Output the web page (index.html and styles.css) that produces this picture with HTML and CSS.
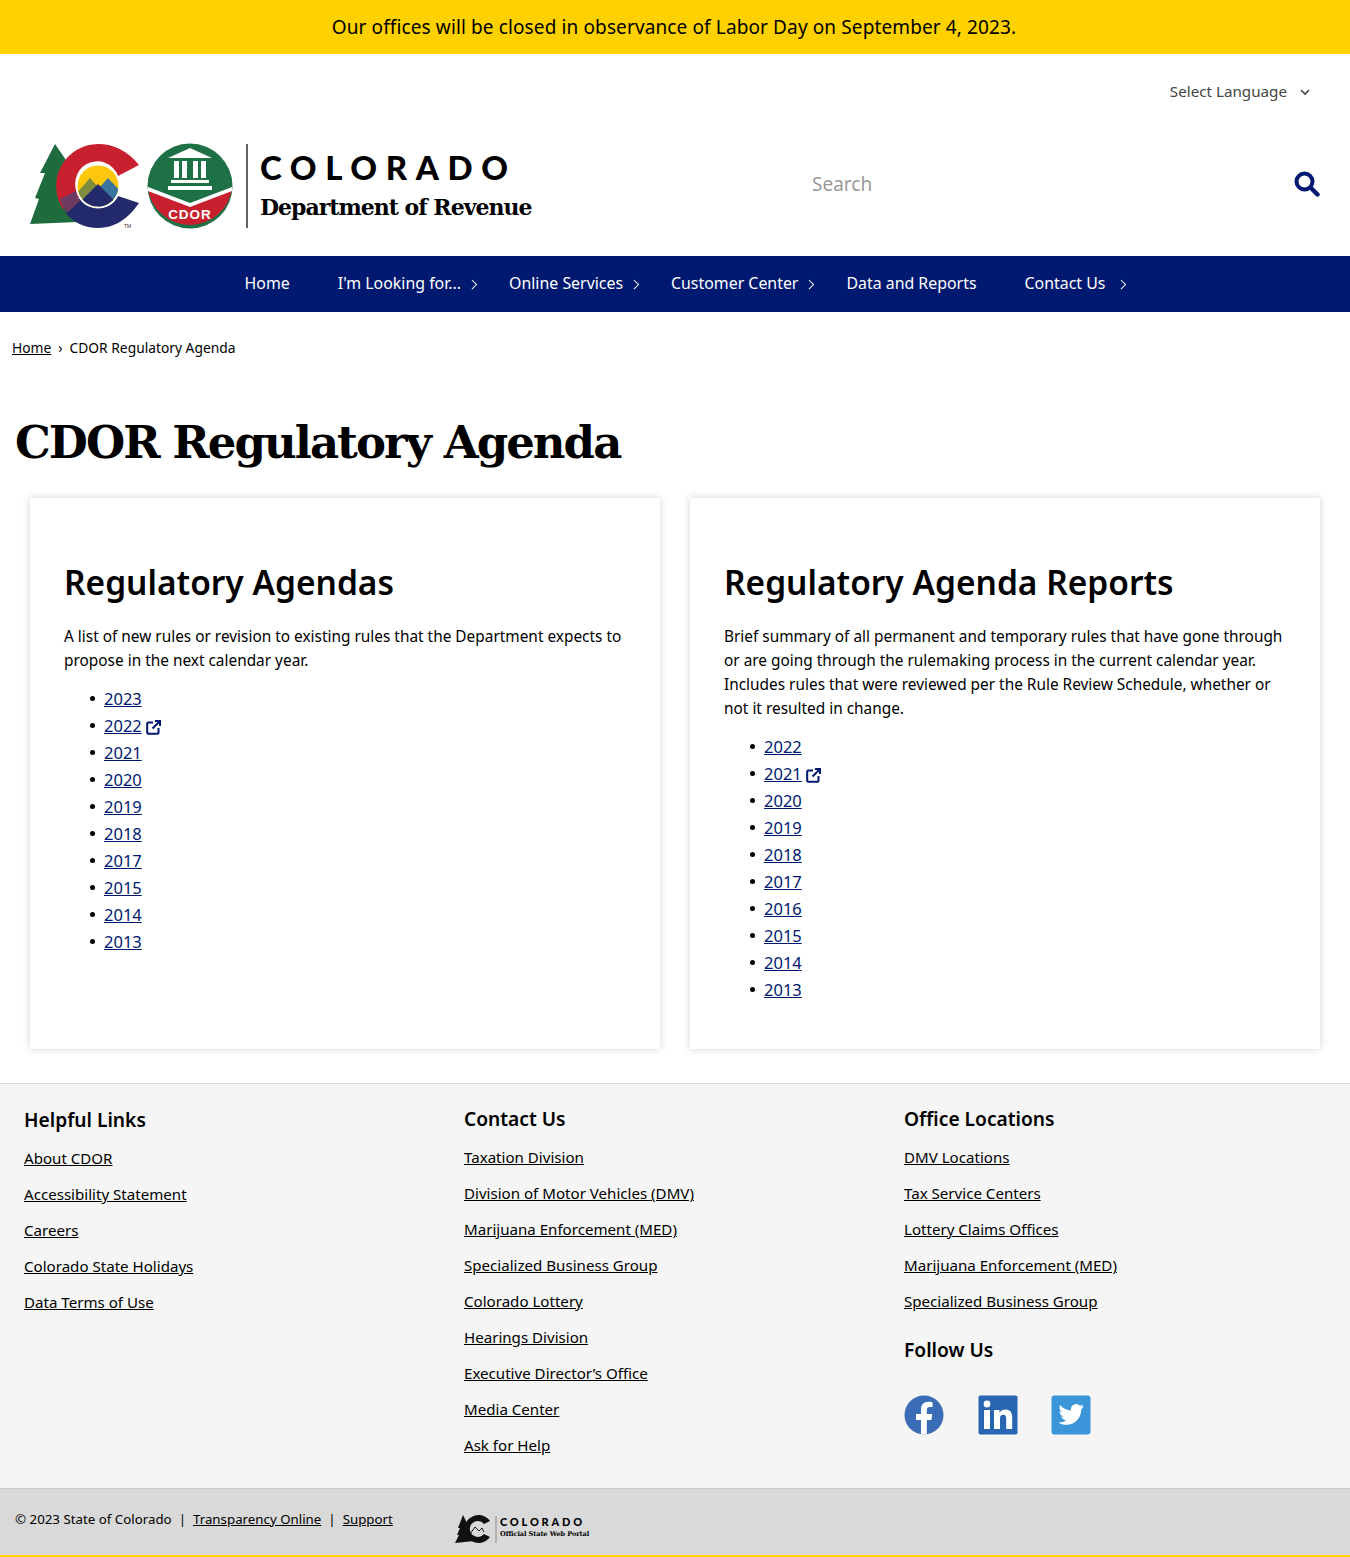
FILE: index.html
```html
<!DOCTYPE html>
<html lang="en">
<head>
<meta charset="utf-8">
<title>CDOR Regulatory Agenda</title>
<link rel="stylesheet" href="styles.css">
</head>
<body>
<div class="alert">Our offices will be closed in observance of Labor Day on September 4, 2023.</div>
<div class="lang"><span>Select Language</span>
<svg class="lang-chev" width="10" height="7" viewBox="0 0 10 7"><path d="M1 1l4 4 4-4" fill="none" stroke="#444" stroke-width="1.6"/></svg></div>
<header class="head">
  <a class="brand" href="#">
    <svg class="marks" width="218" height="86" viewBox="30 142 218 86">
      <defs><clipPath id="sun"><circle cx="98" cy="185" r="20.500"/></clipPath></defs>
      <path d="M55 143L68 162 76 200 78 221 30 223 39 198 35 197 45 172 40 172z" fill="#1e6b3e"/>
      <path d="M139 164Q122 143 98 143A42 42 0 0 0 63 208L80 196A22 22 0 1 1 118 175z" fill="#c8202f"/>
      <path d="M139 202Q122 227 98 227A42 42 0 0 1 65 211L80 197A22 22 0 0 0 118 195z" fill="#232a6c"/>
      <path d="M60 198A42 42 0 0 0 67 212L80 200A22 22 0 0 1 76 190z" fill="#6d3b62"/>
      <circle cx="98" cy="185" r="22.500" fill="#fff"/>
      <g clip-path="url(#sun)">
        <rect x="76" y="163" width="44" height="44" fill="#fdc70c"/>
        <path d="M76 193L90 177 106 195 90 210H76z" fill="#7f8b3f"/>
        <path d="M92 195L108 177 122 192V207H100z" fill="#3b749f"/>
        <path d="M80 201L98 183 116 201 98 210z" fill="#232a6c"/>
      </g>
      <text x="124" y="227" class="tm">TM</text>
      <circle cx="190" cy="185" r="42.500" fill="#1e7145"/>
      <path d="M148 188L190 204 232 188A42.500 42.500 0 0 1 148 188z" fill="#c8202f"/>
      <path d="M148 186L190 202 232 186V190L190 206 148 190z" fill="#fff"/>
      <path d="M168 157L190 147 212 157z" fill="#fff"/>
      <path d="M174 160h5v17h-5zM182 160h5v17h-5zM193 160h5v17h-5zM201 160h5v17h-5z" fill="#fff"/>
      <path d="M171 179h38v3h-38zM168 185h44v4h-44z" fill="#fff"/>
      <text x="190" y="218" class="cdor" text-anchor="middle">CDOR</text>
      <path d="M247 143v84" stroke="#222" stroke-width="1.400"/>
    </svg>
    <span class="brand-text">
      <span class="brand-state">COLORADO</span>
      <span class="brand-dept">Department of Revenue</span>
    </span>
  </a>
  <div class="search">
    <input class="search-input" type="text" placeholder="Search" aria-label="Search">
    <svg width="26" height="26" viewBox="0 0 26 26"><circle cx="10.500" cy="10.500" r="8" fill="none" stroke="#001970" stroke-width="4"/><path d="M16.500 16.500l7 7" stroke="#001970" stroke-width="4.400" stroke-linecap="round"/></svg>
  </div>
</header>
<nav class="nav">
  <a class="nav-item" href="#">Home</a>
  <a class="nav-item has-sub" href="#">I'm Looking for...</a>
  <a class="nav-item has-sub" href="#">Online Services</a>
  <a class="nav-item has-sub" href="#">Customer Center</a>
  <a class="nav-item" href="#">Data and Reports</a>
  <a class="nav-item has-sub nav-item-last" href="#">Contact Us</a>
</nav>
<div class="crumbs"><a href="#">Home</a><span class="crumb-sep">›</span><span>CDOR Regulatory Agenda</span></div>
<h1 class="title">CDOR Regulatory Agenda</h1>
<main class="cards">
  <section class="card">
    <h2>Regulatory Agendas</h2>
    <p>A list of new rules or revision to existing rules that the Department expects to propose in the next calendar year.</p>
    <ul>
      <li><a href="#">2023</a></li>
      <li><a href="#">2022</a><svg class="ext" width="15" height="15" viewBox="0 0 15 15"><path d="M7 2.500H2.200a1 1 0 0 0-1 1v9.300a1 1 0 0 0 1 1h9.300a1 1 0 0 0 1-1V8M9 1h5v5M14 1L6.500 8.500" fill="none" stroke="#001970" stroke-width="2"/></svg></li>
      <li><a href="#">2021</a></li>
      <li><a href="#">2020</a></li>
      <li><a href="#">2019</a></li>
      <li><a href="#">2018</a></li>
      <li><a href="#">2017</a></li>
      <li><a href="#">2015</a></li>
      <li><a href="#">2014</a></li>
      <li><a href="#">2013</a></li>
    </ul>
  </section>
  <section class="card">
    <h2>Regulatory Agenda Reports</h2>
    <p>Brief summary of all permanent and temporary rules that have gone through or are going through the rulemaking process in the current calendar year. Includes rules that were reviewed per the Rule Review Schedule, whether or not it resulted in change.</p>
    <ul>
      <li><a href="#">2022</a></li>
      <li><a href="#">2021</a><svg class="ext" width="15" height="15" viewBox="0 0 15 15"><path d="M7 2.500H2.200a1 1 0 0 0-1 1v9.300a1 1 0 0 0 1 1h9.300a1 1 0 0 0 1-1V8M9 1h5v5M14 1L6.500 8.500" fill="none" stroke="#001970" stroke-width="2"/></svg></li>
      <li><a href="#">2020</a></li>
      <li><a href="#">2019</a></li>
      <li><a href="#">2018</a></li>
      <li><a href="#">2017</a></li>
      <li><a href="#">2016</a></li>
      <li><a href="#">2015</a></li>
      <li><a href="#">2014</a></li>
      <li><a href="#">2013</a></li>
    </ul>
  </section>
</main>
<footer class="foot">
  <div class="foot-col foot-col-first">
    <h3>Helpful Links</h3>
    <a href="#">About CDOR</a>
    <a href="#">Accessibility Statement</a>
    <a href="#">Careers</a>
    <a href="#">Colorado State Holidays</a>
    <a href="#">Data Terms of Use</a>
  </div>
  <div class="foot-col">
    <h3>Contact Us</h3>
    <a href="#">Taxation Division</a>
    <a href="#">Division of Motor Vehicles (DMV)</a>
    <a href="#">Marijuana Enforcement (MED)</a>
    <a href="#">Specialized Business Group</a>
    <a href="#">Colorado Lottery</a>
    <a href="#">Hearings Division</a>
    <a href="#">Executive Director’s Office</a>
    <a href="#">Media Center</a>
    <a href="#">Ask for Help</a>
  </div>
  <div class="foot-col">
    <h3>Office Locations</h3>
    <a href="#">DMV Locations</a>
    <a href="#">Tax Service Centers</a>
    <a href="#">Lottery Claims Offices</a>
    <a href="#">Marijuana Enforcement (MED)</a>
    <a href="#">Specialized Business Group</a>
    <h3 class="follow">Follow Us</h3>
    <div class="social">
      <svg width="40" height="40" viewBox="0 0 40 40"><circle cx="20" cy="20" r="19.500" fill="#3a6db5"/><path d="M17 39.500V25h-5v-6h5v-4.500c0-5 3-7.700 7.500-7.700 2.200 0 4 .3 4 .3v5h-2.500c-2.500 0-3.200 1.500-3.200 3.100V19h5.500l-.9 6h-4.600v14.500z" fill="#fff"/></svg>
      <svg width="40" height="40" viewBox="0 0 40 40"><rect x=".5" y=".5" width="39" height="39" rx="2" fill="#2866b1"/><circle cx="9" cy="9" r="3.400" fill="#fff"/><path d="M6 15h6v19H6zM16 15h5.500v2.800c1-1.800 3-3.300 6-3.300 5.500 0 6.700 3.600 6.700 8.400V34h-6V24c0-2.300-.4-4.300-3-4.300s-3.200 2-3.200 4.200V34h-6z" fill="#fff"/></svg>
      <svg width="40" height="40" viewBox="0 0 40 40"><rect x=".5" y=".5" width="39" height="39" rx="3" fill="#3a96d9"/><path d="M33 11.500c-1 .4-2 .7-3 .8 1.100-.7 1.900-1.700 2.300-2.900-1 .6-2.200 1-3.300 1.300a5.300 5.300 0 0 0-9 4.800C15.600 15.300 11.800 13.200 9.200 10c-1.400 2.400-.7 5.500 1.600 7-.9 0-1.700-.3-2.400-.7 0 2.500 1.800 4.700 4.200 5.200-.8.200-1.600.2-2.400.1.700 2.100 2.600 3.600 4.900 3.700-2.200 1.700-5 2.500-7.800 2.200 2.300 1.500 5.100 2.300 8 2.300 9.700 0 15.200-8.200 14.900-15.600 1-.8 1.900-1.700 2.800-2.700z" fill="#fff"/></svg>
    </div>
  </div>
</footer>
<div class="legal">
  <div class="legal-links">
    <span>© 2023 State of Colorado</span><span class="pipe">|</span><a href="#">Transparency Online</a><span class="pipe">|</span><a href="#">Support</a>
  </div>
  <a class="portal" href="#">
    <svg width="44" height="30" viewBox="0 0 44 30"><path d="M8 1l5 10 3 9 3 7-19 2 4-8-2 0 3-7-2 0z" fill="#111"/><path d="M35 7A14 14 0 1 0 35 23L29 20A8 8 0 1 1 29 10z" fill="#111"/><path d="M15 20l5-7 4 4 3-3 2 4" fill="none" stroke="#111" stroke-width="1"/><path d="M41 2v27" stroke="#888" stroke-width="1"/></svg>
    <span class="portal-text"><span class="portal-state">COLORADO</span><span class="portal-sub">Official State Web Portal</span></span>
  </a>
</div>
</body>
</html>
```
FILE: styles.css
```css
* { box-sizing: border-box; }
html, body { margin: 0; padding: 0; }
body { font-family: "Noto Sans", sans-serif; color: #000; background: #fff; font-size: 15.400px; line-height: 24px; }
a { color: inherit; }
.alert { height: 54px; background: #ffd100; display: flex; align-items: center; justify-content: center; font-size: 19px; letter-spacing: .12px; padding-right: 2px; }
.lang { height: 76px; display: flex; align-items: center; justify-content: flex-end; gap: 13px; padding: 0 40px 2px 0; color: #444; font-size: 15.200px; }
.lang-chev { margin-top: 2px; }
.head { height: 126px; padding: 13px 30px 0; display: flex; justify-content: space-between; }
.brand { display: flex; height: 86px; text-decoration: none; color: #000; gap: 12px; }
.marks { display: block; }
.tm { font: 5px "Liberation Sans", sans-serif; fill: #333; }
.cdor { font: 700 13.500px "Liberation Sans", sans-serif; letter-spacing: 1px; fill: #fff; }
.brand-text { display: flex; flex-direction: column; }
.brand-state { font: 900 33px/48px Lato, sans-serif; letter-spacing: 8.600px; }
.brand-dept { font: 700 22px/32px "DejaVu Serif", serif; letter-spacing: -1px; }
.search { display: flex; align-items: center; width: 508px; height: 82px; justify-content: space-between; }
.search-input { border: 0; outline: 0; background: none; font: 19px "Noto Sans", sans-serif; width: 300px; padding: 0; }
.search-input::placeholder { color: #999; opacity: 1; }
.nav { height: 56px; background: #001970; display: flex; justify-content: center; color: #fff; font-size: 15.900px; }
.nav-item { position: relative; padding: 0 24px; line-height: 55px; text-decoration: none; }
.has-sub::after { content: ""; position: absolute; right: 10px; top: 25px; width: 5.500px; height: 5.500px; border: solid #fff; border-width: 1.800px 1.800px 0 0; transform: rotate(45deg); }
.has-sub.nav-item-last::after { right: 5px; }
.crumbs { padding: 24px 12px 0; font-size: 13.800px; height: 64px; display: flex; gap: 7px; }
.title { margin: 37px 0 0 15px; font: 700 45px/60px "DejaVu Serif", serif; letter-spacing: -1.950px; height: 60px; }
.cards { display: grid; grid-template-columns: 630px 630px; gap: 30px; padding: 25px 30px 0; }
.card { height: 551px; padding: 60px 34px 0; background: #fff; box-shadow: 0 0 8px rgba(0,0,0,.18); }
.card h2 { margin: 0; font-size: 33.500px; line-height: 48px; font-weight: 600; }
.card p { margin: 19px 0 0; }
.card ul { margin: 12px 0 0; padding: 0 0 0 40px; list-style: none; }
.card li { position: relative; height: 27px; line-height: 27px; font-size: 16.500px; }
.card li::before { content: ""; position: absolute; left: -14px; top: 11px; width: 5px; height: 5px; border-radius: 50%; background: #000; }
.card li a { color: #001970; }
.ext { margin-left: 4px; vertical-align: -3px; }
.foot { margin-top: 34px; height: 405px; background: #f5f5f5; border-top: 1px solid #d8d8d8; display: grid; grid-template-columns: 440px 440px 1fr; padding: 22px 0 0 24px; }
.foot-col { display: flex; flex-direction: column; align-items: flex-start; font-size: 15.100px; }
.foot-col-first { padding-top: 1px; }
.foot-col h3 { margin: 0 0 7px; font-size: 19.200px; line-height: 26px; font-weight: 600; }
.foot-col a { height: 36px; line-height: 36px; }
.foot-col .follow { margin: 18px 0 0; }
.social { display: flex; gap: 33.500px; margin-top: 32px; }
.legal { height: 69px; background: #d9d9d9; border-top: 1px solid #c8c8c8; border-bottom: 2px solid #ffd100; display: flex; padding: 18px 0 0 15px; font-size: 13.300px; }
.legal-links { width: 440px; display: flex; height: 24px; }
.pipe { margin: 0 7px; }
.portal { display: flex; height: 30px; text-decoration: none; margin-top: 7px; }
.portal-text { display: flex; flex-direction: column; margin-left: 1px; }
.portal-state { font: 900 11px/14px Lato, sans-serif; letter-spacing: 2.800px; margin-top: 1px; }
.portal-sub { font: 700 6.600px/11px "DejaVu Serif", serif; letter-spacing: -.1px; }
```
